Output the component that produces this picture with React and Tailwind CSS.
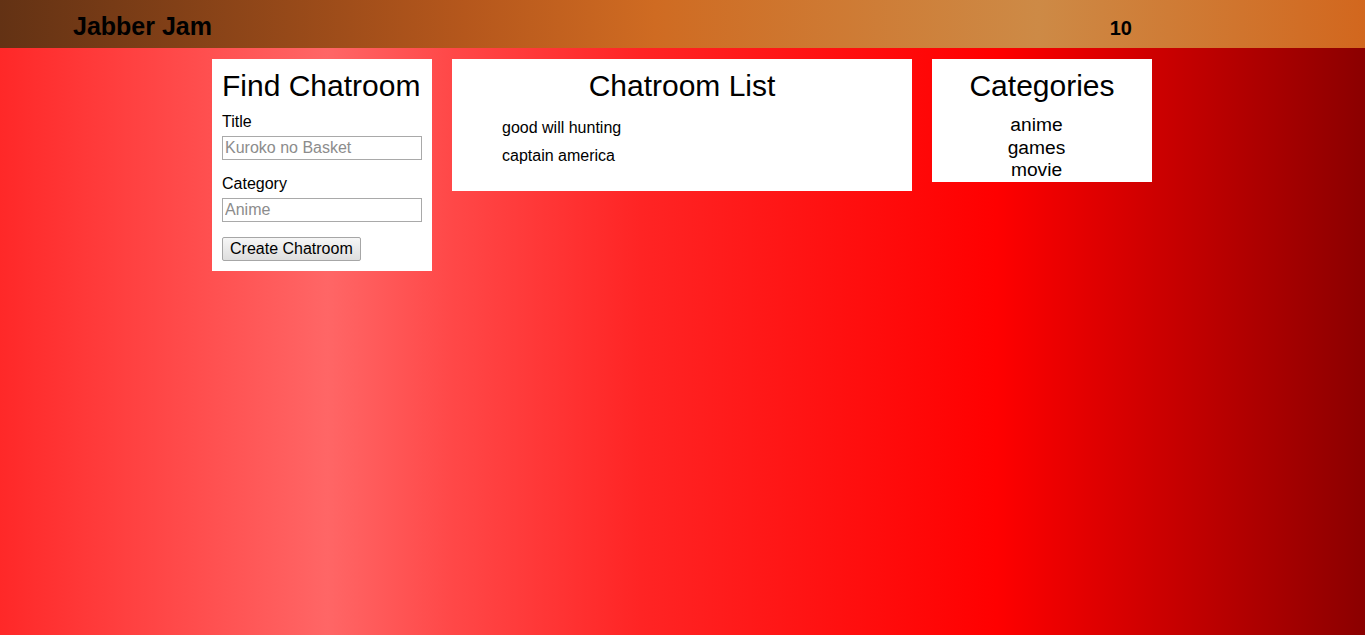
import React from "react";

const font = { fontFamily: '"Liberation Sans", Arial, sans-serif' };

const chatrooms = ["good will hunting", "captain america"];
const categories = ["anime", "games", "movie"];

const Header = () => (
  <div className="flex h-[48px] items-start bg-[linear-gradient(to_right,#633214_0%,#b5571c_34%,#cf6b22_48%,#cd8a46_76%,#d2671e_100%)] text-black">
    <span className="ml-[73px] mt-[12px] text-[25px] font-bold leading-[29px]">
      Jabber Jam
    </span>
    <span className="ml-auto mr-[233px] mt-[17px] text-[20px] font-bold leading-[23px]">
      10
    </span>
  </div>
);

const FindChatroom = () => (
  <div className="w-[220px] bg-white px-[10px] pt-[10px] pb-[10px]">
    <h2 className="text-[30px] font-normal leading-[34px]">Find Chatroom</h2>
    <label className="mt-[10px] block text-[16px] leading-[18px]">Title</label>
    <input
      type="text"
      placeholder="Kuroko no Basket"
      className="mt-[5px] block h-[24px] w-[200px] border border-[#a9a9a9] px-[2px] text-[16px] placeholder:text-[#8c8c8c] focus:outline-none"
    />
    <label className="mt-[15px] block text-[16px] leading-[18px]">Category</label>
    <input
      type="text"
      placeholder="Anime"
      className="mt-[5px] block h-[24px] w-[200px] border border-[#a9a9a9] px-[2px] text-[16px] placeholder:text-[#8c8c8c] focus:outline-none"
    />
    <button
      type="button"
      className="mt-[15px] block h-[24px] rounded-[2px] border border-[#a6a6a6] bg-[linear-gradient(to_bottom,#f6f6f6,#dedede)] px-[7px] text-[16px] leading-[20px] text-black"
    >
      Create Chatroom
    </button>
  </div>
);

const ChatroomList = () => (
  <div className="w-[460px] bg-white px-[10px] pt-[10px] pb-[21px]">
    <h2 className="text-center text-[30px] font-normal leading-[34px]">
      Chatroom List
    </h2>
    <ul className="mt-[11px] pl-[40px]">
      {chatrooms.map((room) => (
        <li key={room} className="text-[16px] leading-[28px]">
          {room}
        </li>
      ))}
    </ul>
  </div>
);

const Categories = () => (
  <div className="w-[220px] bg-white px-[10px] pt-[10px] pb-[0.5px]">
    <h2 className="text-center text-[30px] font-normal leading-[34px]">
      Categories
    </h2>
    <ul className="mt-[11px] pr-[11px] text-center">
      {categories.map((cat) => (
        <li key={cat} className="text-[19.2px] leading-[22.5px]">
          {cat}
        </li>
      ))}
    </ul>
  </div>
);

const App = () => {
  return (
    <div
      style={font}
      className="min-h-[635px] bg-[linear-gradient(to_right,#ff2828_0%,#ff6666_24%,#ff4848_33%,#ff2424_47%,#ff0000_73%,#8b0000_100%)] text-black"
    >
      <Header />
      <div className="ml-[212px] mt-[11px] flex w-[940px] items-start gap-5">
        <FindChatroom />
        <ChatroomList />
        <Categories />
      </div>
    </div>
  );
};

export default App;
